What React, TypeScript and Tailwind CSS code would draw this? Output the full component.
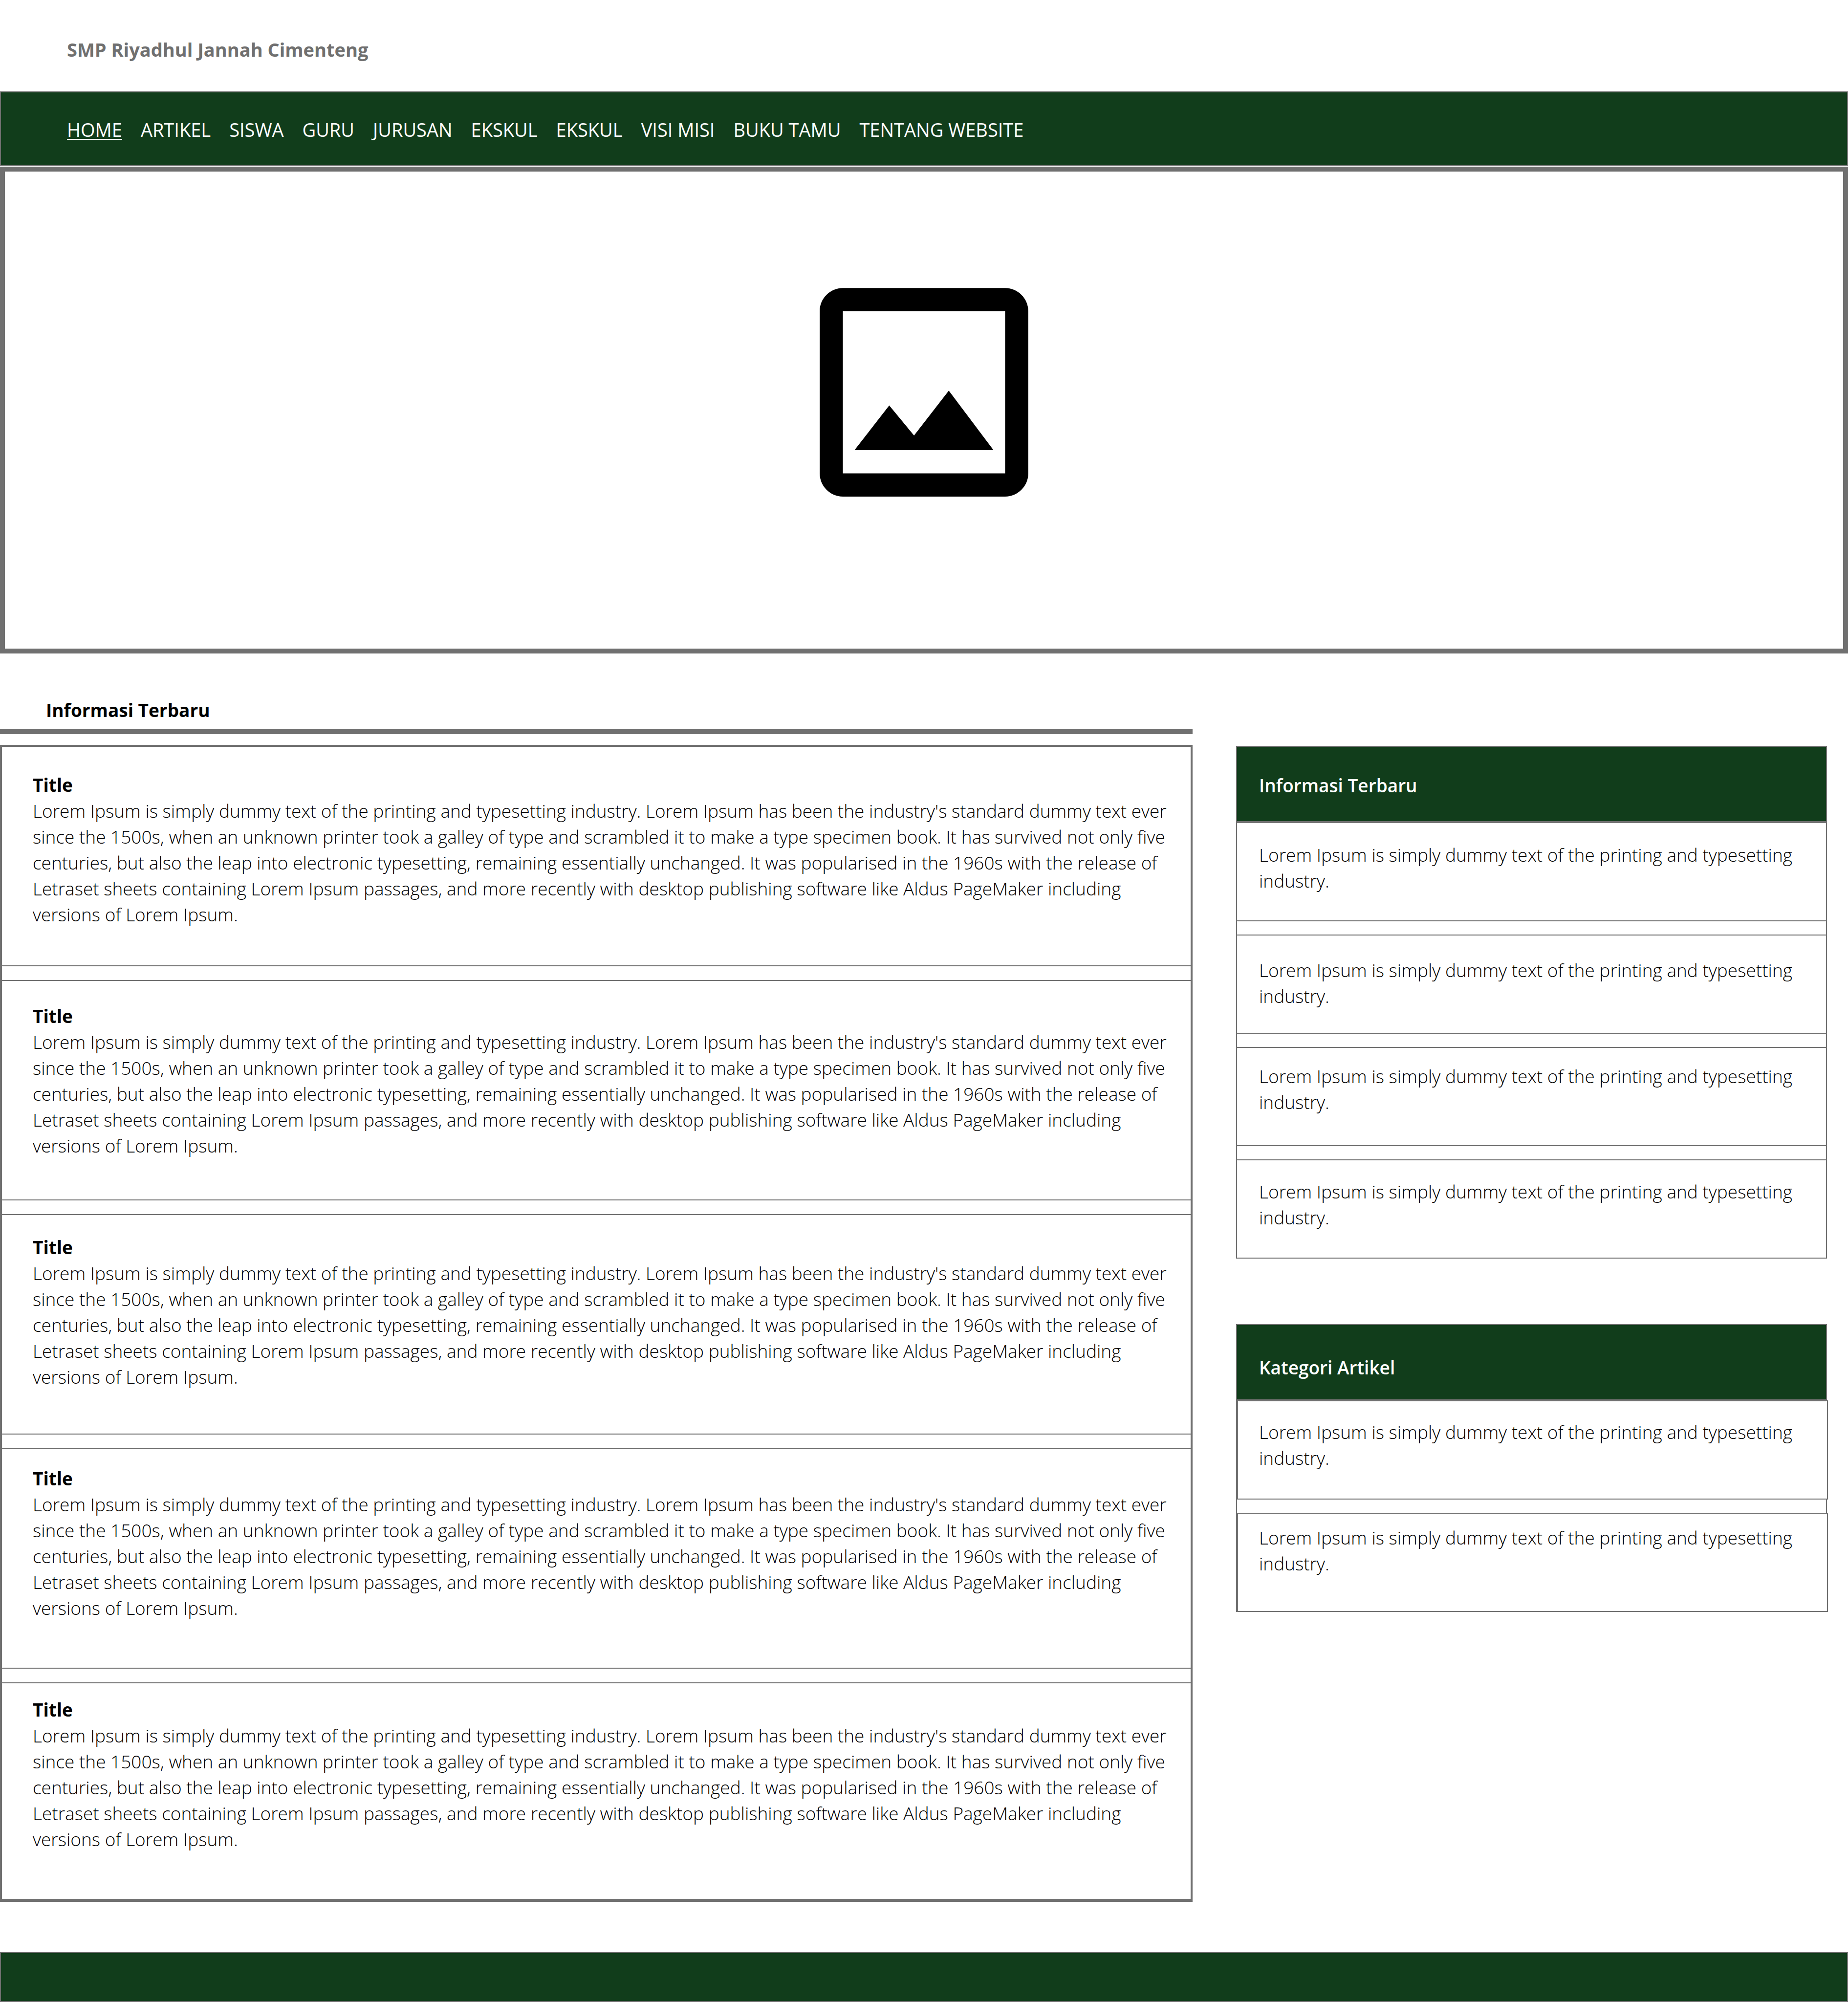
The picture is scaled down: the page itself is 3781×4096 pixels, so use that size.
const menu = [
  'HOME',
  'ARTIKEL',
  'SISWA',
  'GURU',
  'JURUSAN',
  'EKSKUL',
  'EKSKUL',
  'VISI MISI',
  'BUKU TAMU',
  'TENTANG WEBSITE',
];

const articleLines = [
  "Lorem Ipsum is simply dummy text of the printing and typesetting industry. Lorem Ipsum has been the industry's standard dummy text ever",
  'since the 1500s, when an unknown printer took a galley of type and scrambled it to make a type specimen book. It has survived not only five',
  'centuries, but also the leap into electronic typesetting, remaining essentially unchanged. It was popularised in the 1960s with the release of',
  'Letraset sheets containing Lorem Ipsum passages, and more recently with desktop publishing software like Aldus PageMaker including',
  'versions of Lorem Ipsum.',
];

const noteLines = ['Lorem Ipsum is simply dummy text of the printing and typesetting', 'industry.'];

const articles = [
  'pt-[51px] pb-[78px]',
  'pt-[45px] pb-[84px]',
  'pt-[39px] pb-[90px]',
  'pt-[33px] pb-[96px]',
  'pt-[27px] pb-[96px]',
];

const latest = ['pt-[38px] pb-[55px]', 'pt-[44px] pb-[49px]', 'pt-[31px] pb-[62px]', 'pt-[37px] pb-[56px]'];

const categories = ['pt-[36px] pb-[57px]', 'pt-[22px] pb-[71px]'];

function Lines({ lines }: { lines: string[] }) {
  return (
    <p className="font-light">
      {lines.map((line) => (
        <span key={line} className="block whitespace-nowrap">
          {line}{' '}
        </span>
      ))}
    </p>
  );
}

function ImageIcon() {
  return (
    <svg viewBox="0 0 24 24" className="size-[569px]" fill="currentColor" aria-hidden="true">
      <path d="M19 5v14H5V5h14m0-2H5c-1.1 0-2 .9-2 2v14c0 1.1.9 2 2 2h14c1.1 0 2-.9 2-2V5c0-1.1-.9-2-2-2zm-4.86 8.86l-3 3.87L9 13.14 6 17h12l-3.86-5.14z" />
    </svg>
  );
}

export default function App() {
  return (
    <div className="bg-white font-['Open_Sans',sans-serif] text-[37px] leading-[53px] text-black">
      <header className="px-[137px] pt-[75px] pb-[59px]">
        <h1 className="text-[38px] leading-[53px] font-bold text-[#707070]">SMP Riyadhul Jannah Cimenteng</h1>
      </header>

      <nav
        aria-label="Menu utama"
        className="border-2 border-[#707070] bg-[#113d1b] px-[135px] pt-[50px] pb-[45px] text-[38px] leading-[53px] text-white"
      >
        <ul className="flex gap-[38px]">
          {menu.map((label, i) => (
            <li key={i}>
              <a
                href="#"
                aria-current={i === 0 ? 'page' : undefined}
                className={i === 0 ? 'underline decoration-2 underline-offset-[4px]' : ''}
              >
                {label}
              </a>
            </li>
          ))}
        </ul>
      </nav>

      <div className="mt-[2px] flex justify-center border-[10px] border-[#707070] pt-[167px] pb-[240px]">
        <ImageIcon />
      </div>

      <div className="flex items-start gap-[89px] pr-[43px]">
        <main className="min-w-0 flex-1">
          <h2 className="border-b-[10px] border-[#707070] pt-[89px] pb-[13px] pl-[94px] font-bold">Informasi Terbaru</h2>
          <div className="mt-[22px] flex flex-col gap-[28px] border-4 border-t-2 border-[#707070]">
            {articles.map((padding, i) => (
              <article key={i} className={`border-y-2 border-[#707070] px-[63px] ${padding}`}>
                <h3 className="font-bold">Title</h3>
                <Lines lines={articleLines} />
              </article>
            ))}
          </div>
        </main>

        <aside className="w-[1209px] pt-[189px]">
          <section className="border-x-2 border-[#707070]">
            <h2 className="border-y-2 border-[#707070] bg-[#113d1b] px-[45px] pt-[52px] pb-[47px] font-semibold text-white">
              Informasi Terbaru
            </h2>
            <ul className="flex flex-col gap-[27px]">
              {latest.map((padding, i) => (
                <li key={i} className={`border-y-2 border-[#707070] px-[45px] ${padding}`}>
                  <Lines lines={noteLines} />
                </li>
              ))}
            </ul>
          </section>

          <section className="mt-[134px] border-x-2 border-[#707070]">
            <h2 className="border-y-2 border-[#707070] bg-[#113d1b] px-[45px] pt-[60px] pb-[39px] font-semibold text-white">
              Kategori Artikel
            </h2>
            <ul className="-mr-1 flex flex-col gap-[27px]">
              {categories.map((padding, i) => (
                <li key={i} className={`border-2 border-[#707070] bg-white px-[43px] ${padding}`}>
                  <Lines lines={noteLines} />
                </li>
              ))}
            </ul>
          </section>
        </aside>
      </div>

      <footer className="mt-[103px] h-[102px] border-2 border-[#707070] bg-[#113d1b]" />
    </div>
  );
}
